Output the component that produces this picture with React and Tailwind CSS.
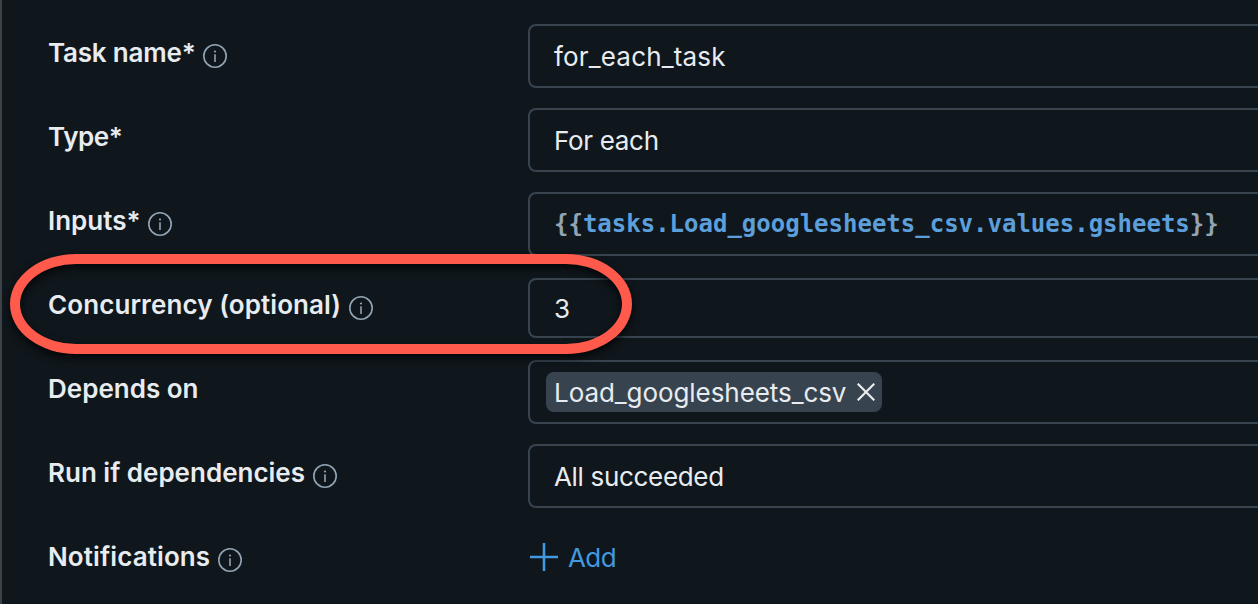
function InfoIcon() {
  return (
    <svg className="mt-[9px] size-6 shrink-0 text-[#92a4b3]" viewBox="0 0 24 24" fill="none" stroke="currentColor">
      <circle cx="12" cy="12" r="11.2" strokeWidth="1.6" />
      <path d="M12 10.3v7.6" strokeWidth="1.6" />
      <circle cx="12" cy="7.5" r="1.1" fill="currentColor" stroke="none" />
    </svg>
  );
}

function Row({ label, width, info, children }) {
  return (
    <div className="flex h-16 items-start">
      <div className="flex w-[480px] shrink-0 items-start gap-2 pt-[11px]">
        <span className={`text-[26px] leading-9 font-semibold whitespace-nowrap ${width}`}>{label}</span>
        {info && <InfoIcon />}
      </div>
      {children}
    </div>
  );
}

const field = "flex grow items-center rounded-l-lg border-2 border-r-0 border-[#37444f]";

export default function App() {
  return (
    <div className="relative h-[604px] w-[1258px] overflow-hidden border-l-2 border-l-[#3c4246] bg-[#0f171c] font-['Inter',sans-serif] text-[26px] text-[#e8ecf0]">
      <div className="flex flex-col gap-5 pt-6 pl-[46px]">
        <Row label="Task name*" width="w-[147px] tracking-[-0.2px]" info>
          <div className={`${field} h-16 pl-6`}>
            <span className="tracking-[0.17px]">for_each_task</span>
          </div>
        </Row>
        <Row label="Type*" width="tracking-[-0.4px]">
          <div className={`${field} h-16 pl-6`}>
            <span className="tracking-[-0.32px]">For each</span>
          </div>
        </Row>
        <Row label="Inputs*" width="w-[92px] tracking-[0px]" info>
          <div className={`${field} h-16 pl-6`}>
            <span className="font-['DejaVu_Sans_Mono',monospace] text-[24px] font-bold whitespace-nowrap text-[#5c9fdb]">
              <span className="text-[#92a4b3]">{"{{"}</span>
              tasks.Load_googlesheets_csv.values.gsheets
              <span className="text-[#92a4b3]">{"}}"}</span>
            </span>
          </div>
        </Row>
        <Row label="Concurrency (optional)" width="w-[293px] tracking-[0.09px]" info>
          <div className={`${field} mt-0.5 h-[60px] pl-6`}>
            <span>3</span>
          </div>
        </Row>
        <Row label="Depends on" width="tracking-[0px]">
          <div className={`${field} h-16 pl-4`}>
            <div className="flex h-10 w-[336px] items-center justify-between rounded-lg bg-[#37444f] pr-[7px] pl-2">
              <span className="tracking-[-0.07px]">Load_googlesheets_csv</span>
              <svg className="size-[18px] shrink-0" viewBox="0 0 18 18" fill="none" stroke="currentColor" strokeWidth="2.2">
                <path d="M.7.7l16.6 16.6M17.3.7L.7 17.3" />
              </svg>
            </div>
          </div>
        </Row>
        <Row label="Run if dependencies" width="w-[257px] tracking-[0px]" info>
          <div className={`${field} h-16 pl-6`}>
            <span className="tracking-[-0.32px]">All succeeded</span>
          </div>
        </Row>
        <Row label="Notifications" width="w-[162px] tracking-[0.1px]" info>
          <div className="flex h-[58px] items-center gap-[10px] pl-0.5 text-[#4299e0]">
            <svg className="size-7 shrink-0" viewBox="0 0 28 28" fill="none" stroke="currentColor" strokeWidth="2.6">
              <path d="M14 0v28M0 14h28" />
            </svg>
            <span className="tracking-[-0.6px]">Add</span>
          </div>
        </Row>
      </div>
      <div className="absolute top-[254px] left-2 h-[100px] w-[622px] rounded-[66px/50px] border-10 border-[#ff5a4b] drop-shadow-[0_4px_4px_rgba(0,0,0,0.8)]" />
    </div>
  );
}
